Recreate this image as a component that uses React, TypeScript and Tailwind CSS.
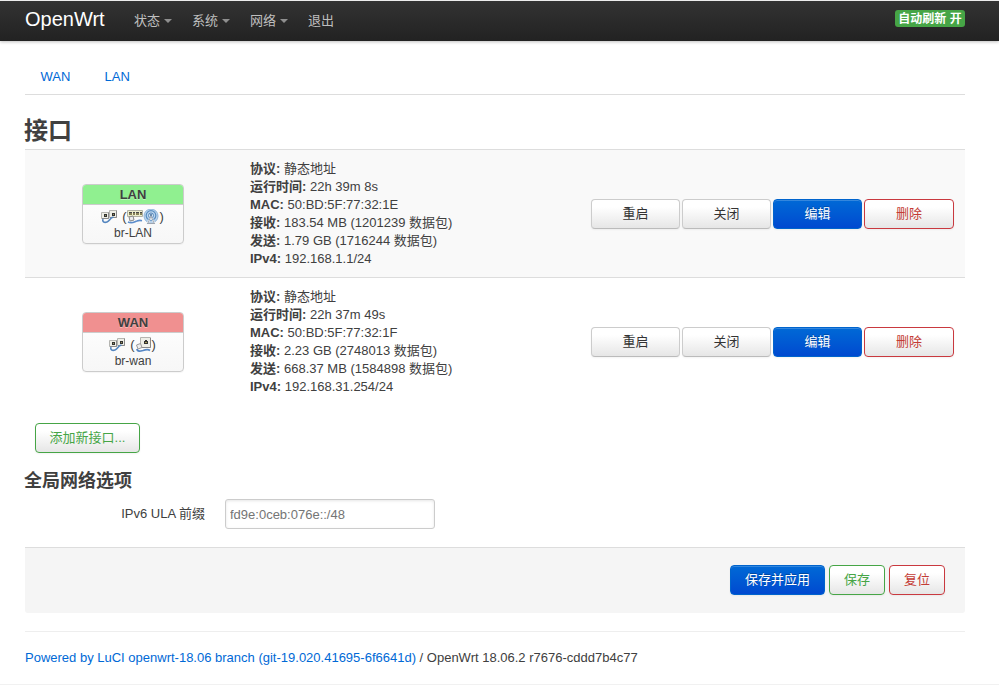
import React from "react";

type Device = "switch" | "wifi" | "adapter";

function PortPair() {
  return (
    <svg className="shrink-0" width="16" height="16" viewBox="0 0 16 16" fill="none">
      <path d="M.5 3.500h7v6h-7zM8.500 1.500h7v7h-7z" fill="#eeeee6" stroke="#b5b5b1" />
      <path d="M1 9.500h6.500v-6M9 8.500h6.500v-7" stroke="#8a8a8a" />
      <path d="M3 5h3v3H3zM11 4h3v3h-3z" fill="#333" />
      <path d="M4 6.500h1M12 5.500h1" stroke="#9b945b" />
      <path d="M2 10c-1 2.500 1 4 4 3 3-1 2.500-4 6.500-5" stroke="#5586bf" strokeWidth="1.600" />
    </svg>
  );
}

function SwitchIcon() {
  return (
    <svg className="shrink-0" width="16" height="16" viewBox="0 0 16 16" fill="none">
      <path d="M.5 1.500h15v6H.5z" fill="#eeeecb" stroke="#b1b1a5" />
      <path d="M2 3h3v3H2zM6 3h2v3H6zM9 3h3v3H9zM13 3h2v3h-2z" fill="#484848" />
      <path d="M2 5h3M6 5h2M9 5h3M13 5h2" stroke="#c6bd69" />
      <path d="m2 8 4-1 1 4-4 1z" fill="#eee" stroke="#888" />
      <path d="M1 13c4 2 6 0 9-1 2-.8 3-.8 5-.3" stroke="#5b8ccb" strokeWidth="1.700" />
    </svg>
  );
}

function WifiIcon() {
  return (
    <svg className="shrink-0" width="16" height="16" viewBox="0 0 16 16" fill="none">
      <circle cx="8" cy="7" r="7" fill="#b8d3ec" stroke="#8fb5da" />
      <circle cx="8" cy="6.500" r="4.800" stroke="#5b8fc2" strokeWidth="1.200" />
      <circle cx="8" cy="6.500" r="2.500" fill="#d5e7f7" stroke="#5688bb" />
      <path d="M8 8 4.500 14.500M8 8l3.500 6.500M3 14.500h10" stroke="#f4f6f8" strokeWidth="1.600" />
      <path d="M8 7 5 14M8 7l3 7M4 14.500h8" stroke="#87929e" strokeWidth=".8" />
      <circle cx="8" cy="6" r="1" fill="#416b96" />
    </svg>
  );
}

function AdapterIcon() {
  return (
    <svg className="shrink-0" width="16" height="16" viewBox="0 0 16 16" fill="none">
      <path d="M5.500.5h10v10h-10z" fill="#eeeee7" stroke="#b5b5b1" />
      <path d="M15.500 1v9.500H6" stroke="#888" />
      <path d="M9 4h4v3H9zM10 3h2v1h-2z" fill="#333" />
      <path d="M10 5.500h2" stroke="#a49d58" />
      <path d="m1.500 8 4-1.500 1.500 4-4 1.500z" fill="#eee" stroke="#999" />
      <path d="M2 12c0 3 4 2 6 1.500 3-1 5-1.500 7 0" stroke="#5586c4" strokeWidth="1.700" />
    </svg>
  );
}

function DeviceIcon({ kind }: { kind: Device }) {
  if (kind === "switch") return <SwitchIcon />;
  if (kind === "wifi") return <WifiIcon />;
  return <AdapterIcon />;
}

const tones = {
  neutral: "border-[#ccc] border-b-[#bbb] bg-linear-to-b from-white from-25% to-[#e6e6e6] text-[#333]",
  primary: "border-[#0064cd] bg-linear-to-b from-[#0069d6] to-[#0049d0] text-white [text-shadow:0_-1px_0_rgba(0,0,0,.25)]",
  positive: "border-[#46a546] bg-linear-to-b from-white from-25% to-[#e6e6e6] text-[#46a546]",
  negative: "border-[#c9393f] bg-linear-to-b from-white from-25% to-[#e6e6e6] text-[#c43c35]",
};

function Button({ tone = "neutral", width, children }: { tone?: keyof typeof tones; width: string; children: React.ReactNode }) {
  return (
    <button className={`h-[30px] shrink-0 rounded-[4px] border text-center whitespace-nowrap shadow-[inset_0_1px_0_rgba(255,255,255,.2),0_1px_2px_rgba(0,0,0,.05)] ${tones[tone]} ${width}`}>
      {children}
    </button>
  );
}

interface Iface {
  name: string;
  bridge: string;
  color: string;
  row: string;
  members: Device[];
  details: [string, string][];
}

const interfaces: Iface[] = [
  {
    name: "LAN", bridge: "br-LAN", color: "bg-[#90f090]", row: "bg-[#f9f9f9]",
    members: ["switch", "wifi"],
    details: [["协议:", "静态地址"], ["运行时间:", "22h 39m 8s"], ["MAC:", "50:BD:5F:77:32:1E"], ["接收:", "183.54 MB (1201239 数据包)"], ["发送:", "1.79 GB (1716244 数据包)"], ["IPv4:", "192.168.1.1/24"]],
  },
  {
    name: "WAN", bridge: "br-wan", color: "bg-[#f09090]", row: "bg-white",
    members: ["adapter"],
    details: [["协议:", "静态地址"], ["运行时间:", "22h 37m 49s"], ["MAC:", "50:BD:5F:77:32:1F"], ["接收:", "2.23 GB (2748013 数据包)"], ["发送:", "668.37 MB (1584898 数据包)"], ["IPv4:", "192.168.31.254/24"]],
  },
];

function InterfaceRow({ item }: { item: Iface }) {
  return (
    <section className={`flex h-32 items-center border-t border-[#ddd] pr-[11px] ${item.row}`}>
      <div className="ml-[57px] h-[60px] w-[102px] shrink-0 overflow-hidden rounded-[4px] border border-[#ccc] bg-linear-to-b from-white to-[#f7f7f7] text-center shadow-[0_1px_1px_rgba(0,0,0,.04)]">
        <div className={`h-5 border-b border-[#ccc] leading-[19px] font-bold [text-shadow:0_1px_0_rgba(255,255,255,.4)] ${item.color}`}>{item.name}</div>
        <div className="mt-1 flex h-4 items-center justify-center pr-px">
          <PortPair />
          <span className="ml-[5px] leading-4">(</span>
          {item.members.map((m) => <DeviceIcon key={m} kind={m} />)}
          <span className="ml-px leading-4">)</span>
        </div>
        <div className="text-[12px] leading-4">{item.bridge}</div>
      </div>
      <div className="ml-[66px] w-[341px] shrink-0">
        {item.details.map(([label, value]) => (
          <div key={label} className="h-[18px] whitespace-nowrap"><strong>{label}</strong> {value}</div>
        ))}
      </div>
      <div className="flex gap-[2px]">
        <Button width="w-[89px]">重启</Button>
        <Button width="w-[89px]">关闭</Button>
        <Button width="w-[89px]" tone="primary">编辑</Button>
        <Button width="w-[90px]" tone="negative">删除</Button>
      </div>
    </section>
  );
}

export default function App() {
  return (
    <div className="flex h-[685px] w-[999px] flex-col overflow-hidden border-t border-b border-t-[#ececec] border-b-[#f1f1f1] bg-white font-['Liberation_Sans','Noto_Sans_CJK_SC',sans-serif] text-[13px] leading-[18px] text-[#404040]">
      <header className="flex h-10 shrink-0 items-center bg-linear-to-b from-[#333] to-[#222] pr-[34px] pl-[25px] text-[#bfbfbf] shadow-[0_1px_3px_rgba(0,0,0,.25)]">
        <span className="mb-[4px] w-[109px] text-[20px] leading-5 text-white">OpenWrt</span>
        <nav className="mb-px flex">
          {["状态", "系统", "网络"].map((t) => (
            <span key={t} className="flex w-[58px] items-center">
              {t}
              <i className="mt-px ml-1 border-x-[4px] border-t-[4px] border-x-transparent border-t-[#8f8f8f]" />
            </span>
          ))}
          <span>退出</span>
        </nav>
        <span className="mb-[5px] ml-auto flex h-[17px] w-[70px] items-center justify-center rounded-[3px] bg-[#46a546] text-[12px] font-bold whitespace-nowrap text-white">自动刷新 开</span>
      </header>
      <main className="mx-[25px] w-[940px]">
        <nav className="mt-[18px] flex h-9 items-center border-b border-[#ddd] pl-[15.5px] text-[#0069d6]">
          <a className="w-16">WAN</a>
          <a>LAN</a>
        </nav>
        <h2 className="mt-[18px] -ml-px h-9 text-[24px] leading-9 font-bold">接口</h2>
        {interfaces.map((i) => <InterfaceRow key={i.name} item={i} />)}
        <div className="mt-[18px] ml-[10px] flex"><Button width="w-[105px]" tone="positive">添加新接口...</Button></div>
        <h3 className="mt-[10px] -ml-px h-9 text-[18px] leading-9 font-bold">全局网络选项</h3>
        <div className="flex h-[30px] items-center">
          <label className="mr-5 w-[180px] text-right">IPv6 ULA 前缀</label>
          <input placeholder="fd9e:0ceb:076e::/48" className="h-[30px] w-[210px] rounded-[3px] border border-[#ccc] px-1 shadow-[inset_0_1px_3px_rgba(0,0,0,.1)] placeholder:text-[#757575]" />
        </div>
        <div className="mt-[18px] flex h-[66px] items-start justify-end gap-1 rounded-b-[3px] border-t border-[#ddd] bg-[#f5f5f5] pt-[17px] pr-5">
          <Button width="w-[95px]" tone="primary">保存并应用</Button>
          <Button width="w-14" tone="positive">保存</Button>
          <Button width="w-14" tone="negative">复位</Button>
        </div>
        <footer className="mt-[18px] border-t border-[#eee] pt-[17px]">
          <a className="text-[#0069d6]">Powered by LuCI openwrt-18.06 branch (git-19.020.41695-6f6641d)</a> / OpenWrt 18.06.2 r7676-cddd7b4c77
        </footer>
      </main>
    </div>
  );
}
